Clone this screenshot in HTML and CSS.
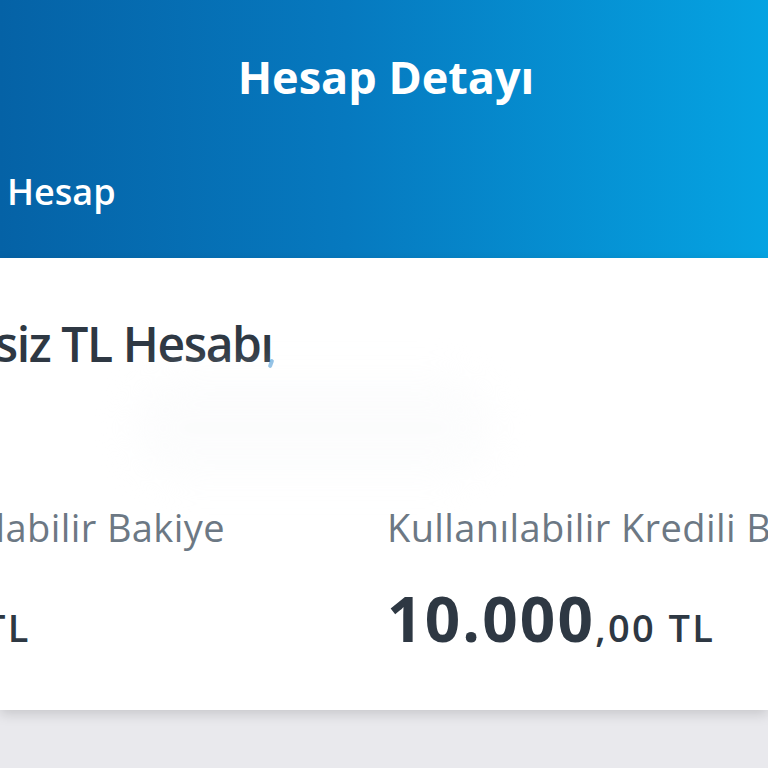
FILE: index.html
```html
<!DOCTYPE html>
<html lang="tr">
<head>
<meta charset="utf-8">
<title>Hesap Detayı</title>
<link rel="stylesheet" href="styles.css">
</head>
<body>
<div class="screen">
  <header class="top">
    <h1 class="title">Hesap Detayı</h1>
    <nav class="tabs"><span class="tab">Hesap</span></nav>
  </header>
  <main class="card">
    <div class="card-inner">
      <h2 class="acct">Vadesiz TL Hesabı<span class="mark"></span></h2>
      <div class="masked"></div>
      <div class="balances">
        <div class="bal">
          <div class="label">Kullanılabilir Bakiye</div>
          <div class="amount"><span class="int">0</span><span class="dec">,00 TL</span></div>
        </div>
        <div class="bal">
          <div class="label">Kullanılabilir Kredili Bakiye</div>
          <div class="amount"><span class="int">10.000</span><span class="dec">,00 TL</span></div>
        </div>
      </div>
    </div>
  </main>
</div>
</body>
</html>
```
FILE: styles.css
```css
html, body {
  margin: 0;
  padding: 0;
  width: 768px;
  height: 768px;
  overflow: hidden;
  background: #e9e9ed;
  font-family: "Open Sans", "Noto Sans", "Liberation Sans", sans-serif;
}
.screen {
  width: 768px;
  height: 768px;
  overflow: hidden;
  display: flex;
  flex-direction: column;
}
.top {
  height: 258px;
  box-sizing: border-box;
  background: linear-gradient(90deg, #0562a6 0%, #0679bf 45%, #05a3e2 100%);
  color: #fff;
  display: flex;
  flex-direction: column;
  padding-top: 47px;
}
.title {
  margin: 0;
  text-align: center;
  font-size: 45px;
  line-height: 60px;
  font-weight: 700;
  letter-spacing: 0;
  padding-left: 4px;
}
.tabs {
  margin-top: 65px;
  padding-left: 7px;
}
.tab {
  font-size: 36px;
  line-height: 40px;
  font-weight: 600;
  letter-spacing: 0;
}
.card {
  background: #fff;
  height: 452px;
  box-shadow: 0 4px 12px rgba(0, 0, 0, 0.15);
  overflow: hidden;
  position: relative;
}
.card-inner {
  margin-left: -127px;
  padding-top: 56px;
}
.acct {
  margin: 0 0 0 12px;
  font-size: 48px;
  line-height: 60px;
  font-weight: 600;
  color: #2e3843;
  letter-spacing: -1.4px;
  position: relative;
  display: inline-block;
}
.mark {
  position: absolute;
  right: 0;
  bottom: 6px;
  width: 4px;
  height: 9px;
  border-radius: 2px;
  background: #3a8fd0;
  opacity: 0.6;
  transform: rotate(20deg);
}
.masked {
  margin: 4px 0 0 260px;
  width: 360px;
  height: 100px;
  border-radius: 50px;
  background: #f9fafb;
  filter: blur(18px);
  opacity: 0.5;
}
.balances {
  margin-top: 27px;
  display: grid;
  grid-template-columns: 514px 1fr;
}
.bal {
  display: flex;
  flex-direction: column;
  gap: 38px;
  white-space: nowrap;
}
.label {
  font-size: 38px;
  line-height: 44px;
  color: #6c7884;
  letter-spacing: 0.4px;
}
.amount {
  color: #2e3843;
  line-height: 62px;
}
.int {
  font-size: 62px;
  font-weight: 700;
  letter-spacing: 2.2px;
}
.dec {
  font-size: 38px;
  font-weight: 600;
  letter-spacing: 2.4px;
}
```
